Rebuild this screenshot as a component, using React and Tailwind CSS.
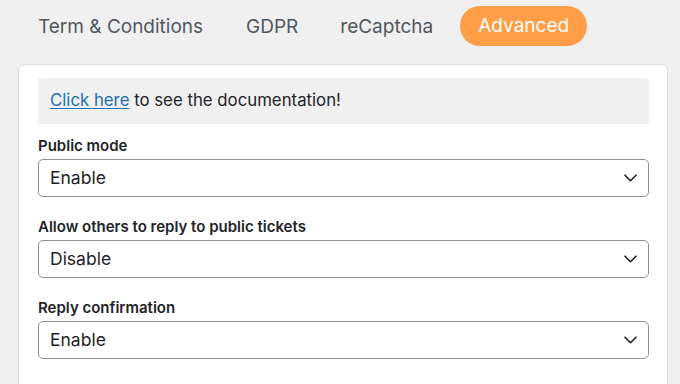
import React from "react";

const tabs = ["Term & Conditions", "GDPR", "reCaptcha"];

const fields = [
  { label: "Public mode", value: "Enable" },
  { label: "Allow others to reply to public tickets", value: "Disable" },
  { label: "Reply confirmation", value: "Enable" },
];

function Chevron() {
  return (
    <svg width="13" height="8" viewBox="0 0 13 8" fill="none" className="shrink-0">
      <path d="M1 1.2l5.5 5.5L12 1.2" stroke="#1e1e1e" strokeWidth="1.6" strokeLinecap="round" strokeLinejoin="round" />
    </svg>
  );
}

function SelectField({ label, value }) {
  return (
    <div className="flex flex-col">
      <label className="text-[15px] font-semibold text-[#1d2327] leading-[20px]">{label}</label>
      <div className="mt-[3px] h-[38px] flex items-center justify-between rounded-[5px] border border-[#8c8f94] bg-white pl-[11px] pr-[11px]">
        <span className="text-[17.5px] text-[#1d2327]">{value}</span>
        <Chevron />
      </div>
    </div>
  );
}

export default function App() {
  return (
    <div
      className="w-[680px] h-[384px] overflow-hidden bg-[#f0f0f0]"
      style={{ fontFamily: "Inter, 'Noto Sans', sans-serif" }}
    >
      {/* tabs */}
      <div className="flex items-center h-[52px] pl-[38px]">
        {tabs.map((t, i) => (
          <span key={t} className={`mt-[2px] text-[19px] text-[#50575e] ${i === 0 ? "mr-[43px]" : i === 1 ? "mr-[42px]" : "mr-[27px]"}`}>
            {t}
          </span>
        ))}
        <span className="h-[40px] flex items-center rounded-full bg-[#ff9e46] px-[18px] text-[19px] text-white">
          Advanced
        </span>
      </div>

      {/* card */}
      <div className="mt-[12px] ml-[18px] w-[650px] rounded-[6px] border border-[#dcdde3] bg-white pl-[19px] pr-[18px] pt-[13px] pb-[40px]">
        <div className="h-[46px] flex items-center rounded-[3px] bg-[#f0f0f0] px-[12px] text-[16.8px] text-[#1d2327]">
          <a className="text-[#2271b1] underline underline-offset-2">Click here</a>
          <span>&nbsp;to see the documentation!</span>
        </div>

        <div className="mt-[12px] flex flex-col gap-[20px]">
          {fields.map((f) => (
            <SelectField key={f.label} {...f} />
          ))}
        </div>
      </div>
    </div>
  );
}
